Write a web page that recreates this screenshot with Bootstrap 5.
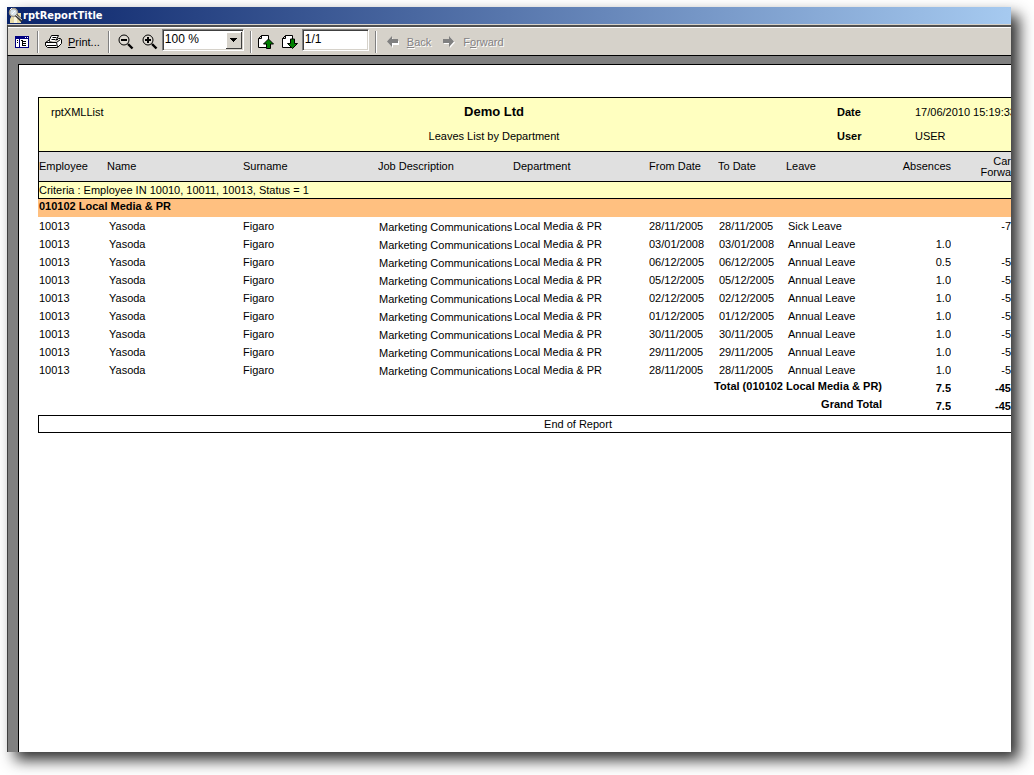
<!DOCTYPE html>
<html lang="en">
<head>
<meta charset="utf-8">
<meta name="viewport" content="width=device-width, initial-scale=1">
<title>rptReportTitle</title>
<link href="https://cdn.jsdelivr.net/npm/bootstrap@5.3.0/dist/css/bootstrap.min.css" rel="stylesheet">
<style>
  body { font-family: "Liberation Sans", Arial, sans-serif; font-size: 11px; line-height: 14px; color: #000; background: #fff; padding: 7px 23px 23px 7px; }
  .viewer { flex: 1; min-width: 0; box-shadow: 8px 8px 14px rgba(0,0,0,.82); background: #808080; }
  .titlebar { height: 17px; padding-left: 1px; background: linear-gradient(90deg, #0a246a, #a6caf0); color: #fff; font: bold 11px/17px "DejaVu Sans Condensed", "DejaVu Sans", sans-serif; }
  .toolbar { height: 32px; background: #d6d2ca; border-top: 1px solid #d6d2ca; box-shadow: inset 0 2px #505050, inset 0 3px #fff; border-bottom: 1px solid #000; border-left: 1px solid #404040; padding: 4px 0 0 7px; }
  .tool { border: 0; background: none; padding: 0; color: #000; line-height: 16px; }
  .tool:disabled { color: #848284; text-shadow: 1px 1px #fff; }
  .tool svg, .titlebar svg { display: block; flex: none; }
  .divider { width: 2px; height: 22px; border-left: 1px solid #808080; border-right: 1px solid #fff; }
  .gap-before { margin-left: 6px; }
  .sunken { height: 22px; border: 1px solid; border-color: #808080 #fff #fff #808080; box-shadow: inset 1px 1px #404040, inset -1px -1px #d6d2ca; background-color: #fff; border-radius: 0; font-size: 12px; padding: 0 2px 1px; color: #000; outline: 0; margin-top: -5px; }
  .zoombox { width: 82px; appearance: none; background: #fff url("data:image/svg+xml,%3Csvg xmlns='http://www.w3.org/2000/svg' width='16' height='17' shape-rendering='crispEdges'%3E%3Cpath fill='%23404040' d='M0 0h16v17H0z'/%3E%3Cpath fill='%23fff' d='M0 0h15v16H0z'/%3E%3Cpath fill='%23d6d2ca' d='M1 1h14v15H1z'/%3E%3Cpath d='M4 6h7v1H4zM5 7h5v1H5zM6 8h3v1H6zM7 9h1v1H7z'/%3E%3C/svg%3E") right 1px top 2px no-repeat; }
  .pagebox { width: 67px; }
  .canvas-area { background: #808080; border-left: 1px solid #404040; padding: 8px 0 0 10px; }
  .paper { background: #fff; border-top: 1px solid #000; border-left: 1px solid #000; padding: 32px 0 0 19px; }
  .report-head { border: 1px solid #000; border-width: 1px 0 0 1px; background: #ffffc0; height: 54px; display: grid; grid-template-columns: 112px minmax(0,1fr) 78px 96px; grid-template-rows: 24px 24px; padding-top: 2px; align-items: center; white-space: nowrap; overflow: hidden; }
  .report-head .company { font-size: 13px; }
  .report { table-layout: fixed; width: 100%; border-collapse: separate; border-spacing: 0; white-space: nowrap; }
  .report th, .report td { padding: 0; font-weight: 400; height: 18px; vertical-align: middle; overflow: hidden; }
  .report thead th { background: #e0e0e0; border-top: 1px solid #000; border-bottom: 1px solid #000; height: 31px; line-height: 11px; }
  .report tr > .edge { border-left: 1px solid #000; }
  .report .criteria { background: #ffffc0; border-bottom: 1px solid #000; height: 17px; }
  .report .group { background: #ffc080; font-weight: 700; padding: 0 0 4px 1px; }
  .records td:first-child { padding-left: 1px; }
  .records td:nth-child(2), .records td:nth-child(8) { padding-left: 2px; }
  .records td:nth-child(4) { padding: 2px 0 0 1px; }
  .records td:nth-child(5), .records td:nth-child(7) { padding-left: 1px; }
  .report tfoot td, .report tfoot th { font-weight: 700; }
  .report .total-label { padding: 0 4px 4px 0; }
  .report-end { border: 1px solid #000; border-right: 0; height: 18px; line-height: 17px; padding-left: 106px; }
</style>
</head>
<body class="d-flex min-vh-100 m-0">
<main class="viewer d-flex flex-column">
  <header class="titlebar d-flex">
    <svg width="15" height="17" viewBox="0 0 15 17"><path fill="#e8dca8" d="M5 6h8v10H2v-4z"/><path fill="#f8f4e0" d="M6 5h3v11H6z"/><circle cx="5.500" cy="5.500" r="4" fill="#d8e4ec" stroke="#a09888" stroke-width="1.500"/><path d="M2 3l2-2M4 7l3-3" stroke="#fff"/><path d="M8 8l6 6" stroke="#333" stroke-width="3"/><path d="M8 8l6 5" stroke="#ddd"/></svg>
    <span>rptReportTitle</span>
  </header>

  <nav class="toolbar d-flex align-items-center" aria-label="Report tools">
    <button class="tool" aria-label="Table of contents"><svg width="14" height="12" shape-rendering="crispEdges"><path fill="#000080" d="M0 0h14v12H0z"/><path fill="#fff" d="M1 3h3v8H1zM5 3h8v8H5z"/><path fill="#fff" d="M10 1h1v1h-1zM12 1h1v1h-1z"/><path d="M2 4h1v1H2zM2 6h1v1H2zM6 4h2v1H6zM7 5h1v5H7zM8 5h3v1H8zM8 7h3v1H8zM8 9h3v1H8z"/></svg></button>
    <span class="divider ms-2"></span>
    <button class="tool d-flex align-items-center gap-before"><svg width="17" height="16" viewBox="0 0 17 16"><path fill="#fff" stroke="#000" d="M6.500 1.500h7l-3 6h-7z"/><path d="M7.500 3.500h4M6.500 5.500h4" stroke="#000"/><path fill="#fff" stroke="#000" d="M.5 8.500l3-2h1v1h7v-1l2-2h2l1 1v4l-4 4h-10l-2-2z"/><path fill="#d6d2ca" stroke="#000" d="M.5 8.500h11l4-3M11.500 8.500l1 4.500M1.500 11.500h10"/></svg><span class="gap-before"><u>P</u>rint...</span></button>
    <span class="divider ms-2 me-2"></span>
    <button class="tool" aria-label="Zoom out"><svg width="16" height="16" viewBox="0 0 16 16"><circle cx="6" cy="6" r="5" fill="#dedad2" stroke="#000"/><path d="M3 6h6" stroke="#000" stroke-width="2"/><path d="M10 10l4.500 4.500" stroke="#000" stroke-width="2.400"/></svg></button>
    <button class="tool ms-2" aria-label="Zoom in"><svg width="16" height="16" viewBox="0 0 16 16"><circle cx="6" cy="6" r="5" fill="#dedad2" stroke="#000"/><path d="M3 6h6M6 3v6" stroke="#000" stroke-width="2"/><path d="M10 10l4.500 4.500" stroke="#000" stroke-width="2.400"/></svg></button>
    <select class="sunken zoombox ms-1" aria-label="Zoom"><option>100 %</option></select>
    <span class="divider gap-before"></span>
    <button class="tool gap-before" aria-label="Previous page"><svg width="16" height="14" viewBox="0 0 16 14"><path fill="#fff" stroke="#000" d="M3.500.5h7v12h-10v-9h3zM3.500.5l-3 3"/><path fill="#008000" stroke="#000" d="M10.500 4l5 5h-3v4.500h-4V9h-3z"/></svg></button>
    <button class="tool ms-2" aria-label="Next page"><svg width="16" height="14" viewBox="0 0 16 14"><path fill="#fff" stroke="#000" d="M3.500.5h7v12h-10v-9h3zM3.500.5l-3 3"/><path fill="#008000" stroke="#000" d="M10.500 13.500l5-5h-3V4h-4v4.500h-3z"/></svg></button>
    <input class="sunken pagebox ms-1" type="text" value="1/1" aria-label="Page">
    <span class="divider gap-before me-1"></span>
    <button class="tool d-flex align-items-center gap-before" disabled><svg width="12" height="12"><path fill="#fff" d="M1 6.500L6 2v3h6v4H6v3z"/><path fill="#808080" d="M0 5.500L5 0v3h6v4H5v4z"/></svg><span class="ms-2"><u>B</u>ack</span></button>
    <button class="tool d-flex align-items-center ms-2" disabled><svg class="ms-1" width="12" height="12"><path fill="#fff" d="M12 6.500L7 1v3H1v4h6v4z"/><path fill="#808080" d="M11 5.500L6 0v3H0v4h6v4z"/></svg><span class="ms-2">F<u>o</u>rward</span></button>
  </nav>

  <div class="canvas-area flex-grow-1 d-flex">
    <article class="paper flex-grow-1 overflow-hidden">
      <section class="report-head">
        <span class="ps-2 ms-1">rptXMLList</span><b class="company text-center">Demo Ltd</b><b>Date</b><span>17/06/2010 15:19:33</span>
        <span></span><span class="text-center">Leaves List by Department</span><b>User</b><span>USER</span>
      </section>
      <table class="report">
        <colgroup><col style="width:69px"><col style="width:136px"><col style="width:135px"><col style="width:135px"><col style="width:136px"><col style="width:69px"><col style="width:68px"><col style="width:100px"><col style="width:65px"><col></colgroup>
        <thead>
          <tr><th class="edge">Employee</th><th>Name</th><th>Surname</th><th>Job Description</th><th>Department</th><th>From Date</th><th>To Date</th><th>Leave</th><th class="text-end">Absences</th><th class="text-end">Car<br>Forwa</th></tr>
          <tr><td class="criteria edge" colspan="10">Criteria : Employee IN 10010, 10011, 10013, Status = 1</td></tr>
        </thead>
        <tbody><tr><th class="group" colspan="10">010102 Local Media &amp; PR</th></tr></tbody>
        <tbody class="records">
          <tr><td>10013</td><td>Yasoda</td><td>Figaro</td><td>Marketing Communications</td><td>Local Media &amp; PR</td><td>28/11/2005</td><td>28/11/2005</td><td>Sick Leave</td><td class="text-end"></td><td class="text-end">-7</td></tr>
          <tr><td>10013</td><td>Yasoda</td><td>Figaro</td><td>Marketing Communications</td><td>Local Media &amp; PR</td><td>03/01/2008</td><td>03/01/2008</td><td>Annual Leave</td><td class="text-end">1.0</td><td class="text-end"></td></tr>
          <tr><td>10013</td><td>Yasoda</td><td>Figaro</td><td>Marketing Communications</td><td>Local Media &amp; PR</td><td>06/12/2005</td><td>06/12/2005</td><td>Annual Leave</td><td class="text-end">0.5</td><td class="text-end">-5</td></tr>
          <tr><td>10013</td><td>Yasoda</td><td>Figaro</td><td>Marketing Communications</td><td>Local Media &amp; PR</td><td>05/12/2005</td><td>05/12/2005</td><td>Annual Leave</td><td class="text-end">1.0</td><td class="text-end">-5</td></tr>
          <tr><td>10013</td><td>Yasoda</td><td>Figaro</td><td>Marketing Communications</td><td>Local Media &amp; PR</td><td>02/12/2005</td><td>02/12/2005</td><td>Annual Leave</td><td class="text-end">1.0</td><td class="text-end">-5</td></tr>
          <tr><td>10013</td><td>Yasoda</td><td>Figaro</td><td>Marketing Communications</td><td>Local Media &amp; PR</td><td>01/12/2005</td><td>01/12/2005</td><td>Annual Leave</td><td class="text-end">1.0</td><td class="text-end">-5</td></tr>
          <tr><td>10013</td><td>Yasoda</td><td>Figaro</td><td>Marketing Communications</td><td>Local Media &amp; PR</td><td>30/11/2005</td><td>30/11/2005</td><td>Annual Leave</td><td class="text-end">1.0</td><td class="text-end">-5</td></tr>
          <tr><td>10013</td><td>Yasoda</td><td>Figaro</td><td>Marketing Communications</td><td>Local Media &amp; PR</td><td>29/11/2005</td><td>29/11/2005</td><td>Annual Leave</td><td class="text-end">1.0</td><td class="text-end">-5</td></tr>
          <tr><td>10013</td><td>Yasoda</td><td>Figaro</td><td>Marketing Communications</td><td>Local Media &amp; PR</td><td>28/11/2005</td><td>28/11/2005</td><td>Annual Leave</td><td class="text-end">1.0</td><td class="text-end">-5</td></tr>
        </tbody>
        <tfoot>
          <tr><th class="total-label text-end" colspan="8">Total (010102 Local Media &amp; PR)</th><td class="text-end">7.5</td><td class="text-end">-45</td></tr>
          <tr><th class="total-label text-end" colspan="8">Grand Total</th><td class="text-end">7.5</td><td class="text-end">-45</td></tr>
        </tfoot>
      </table>
      <div class="report-end text-center">End of Report</div>
    </article>
  </div>
</main>
<script src="https://cdn.jsdelivr.net/npm/bootstrap@5.3.0/dist/js/bootstrap.bundle.min.js"></script>
</body>
</html>
